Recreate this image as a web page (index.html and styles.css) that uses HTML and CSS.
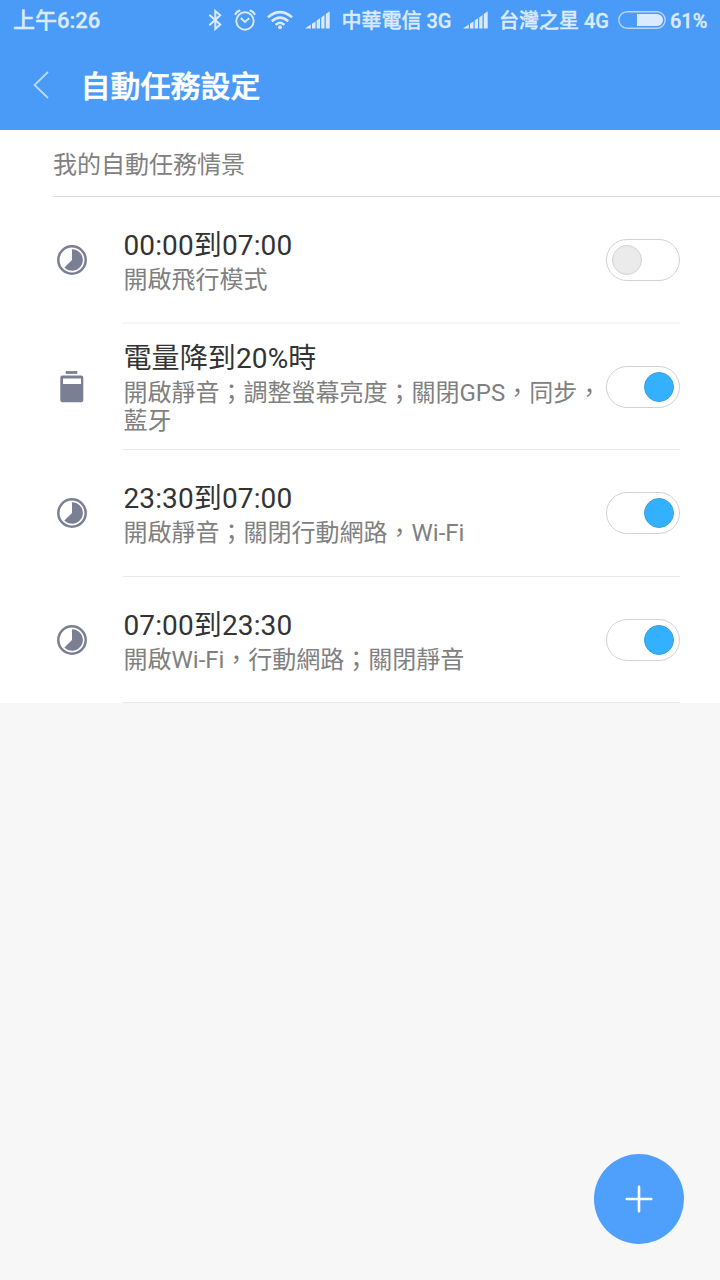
FILE: index.html
```html
<!DOCTYPE html>
<html lang="zh-Hant">
<head>
<meta charset="utf-8">
<title>自動任務設定</title>
<link rel="stylesheet" href="styles.css">
</head>
<body>
<svg class="defs" width="0" height="0">
  <symbol id="clock" viewBox="0 0 30 30">
    <circle cx="15" cy="15" r="13.7" fill="none" stroke="#7a7f94" stroke-width="2.5"/>
    <path d="M15 15V4.2A10.8 10.8 0 1 1 7.4 22.6Z" fill="#7a7f94"/>
  </symbol>
  <symbol id="signal" viewBox="0 0 26 18">
    <path d="M0 17.5 5.8 13.5V17.5ZM7 12.8 10.5 10.4V17.5H7ZM11.7 9.6 15 7.2V17.5H11.7ZM16.2 6.4 19.5 4V17.5H16.2ZM20.8 3 24.7.2V17.5H20.8Z" fill="currentColor"/>
  </symbol>
</svg>
<div class="screen">
  <header class="header">
    <div class="status">
      <span class="time">上午6:26</span>
      <svg class="bt" viewBox="0 0 14 22"><path d="M1.3 5.8 12.2 15.6 7.3 20V2L12.2 6.2 1.3 16.2" fill="none" stroke="currentColor" stroke-width="2"/></svg>
      <svg class="alarm" viewBox="0 0 22 22"><circle cx="11" cy="12" r="8.7" fill="none" stroke="currentColor" stroke-width="1.9"/><path d="M6.7 9 11 13 15.2 9.2" fill="none" stroke="currentColor" stroke-width="1.9"/><path d="M1 5.7Q2.6 2.4 6.3 1.3M15.7 1.3Q19.4 2.4 21 5.7" fill="none" stroke="currentColor" stroke-width="2"/></svg>
      <svg class="wifi" viewBox="0 0 26 20"><path d="M1 7.2Q13-3 25 7.2M4.8 11.2Q13 4 21.2 11.2M8.6 14.9Q13 10.7 17.4 14.9" fill="none" stroke="currentColor" stroke-width="2.5"/><circle cx="13" cy="17.2" r="2" fill="currentColor"/></svg>
      <svg class="signal"><use href="#signal"/></svg>
      <span class="carrier first">中華電信 3G</span>
      <svg class="signal second"><use href="#signal"/></svg>
      <span class="carrier">台灣之星 4G</span>
      <svg class="battery" viewBox="0 0 48 18"><rect x=".8" y=".8" width="46.4" height="16.4" rx="8.2" fill="none" stroke="currentColor" stroke-width="1.4" opacity=".75"/><path d="M19 3H39A6 6 0 0 1 39 15H19Z" fill="currentColor"/></svg>
      <span class="carrier percent">61%</span>
    </div>
    <div class="titlebar">
      <svg class="back" viewBox="0 0 16 28"><path d="M15 1 1.5 14 15 27" fill="none" stroke="#fff" stroke-width="1.8" opacity=".62"/></svg>
      <h1 class="title">自動任務設定</h1>
    </div>
  </header>
  <main class="list">
    <h2 class="section">我的自動任務情景</h2>
    <div class="row soft">
      <svg class="icon"><use href="#clock"/></svg>
      <div class="body"><div class="text"><div class="name">00:00到07:00</div><div class="desc">開啟飛行模式</div></div><span class="toggle"><i class="knob"></i></span></div>
    </div>
    <div class="row short">
      <svg class="icon" viewBox="0 0 30 30"><path d="M8.7-.9H20.3V1.9H8.7Z" fill="#7a7f94"/><path fill-rule="evenodd" d="M5.2 3.5H24.3Q26.3 3.5 26.3 5.5V28.3Q26.3 30.3 24.3 30.3H5.2Q3.3 30.3 3.3 28.3V5.5Q3.3 3.5 5.2 3.5ZM6 6.5V11.9H24V6.5Z" fill="#7a7f94"/></svg>
      <div class="body"><div class="text"><div class="name">電量降到20%時</div><div class="desc">開啟靜音；調整螢幕亮度；關閉GPS，同步，<br>藍牙</div></div><span class="toggle on"><i class="knob"></i></span></div>
    </div>
    <div class="row">
      <svg class="icon"><use href="#clock"/></svg>
      <div class="body"><div class="text"><div class="name">23:30到07:00</div><div class="desc">開啟靜音；關閉行動網路，Wi-Fi</div></div><span class="toggle on"><i class="knob"></i></span></div>
    </div>
    <div class="row short">
      <svg class="icon"><use href="#clock"/></svg>
      <div class="body"><div class="text"><div class="name">07:00到23:30</div><div class="desc">開啟Wi-Fi，行動網路；關閉靜音</div></div><span class="toggle on"><i class="knob"></i></span></div>
    </div>
  </main>
  <button class="add" aria-label="新增"><svg viewBox="0 0 28 28" width="28" height="28"><path d="M14 1.8V26.2M1.8 14H26.2" stroke="#fff" stroke-width="2.6" stroke-linecap="round"/></svg></button>
</div>
</body>
</html>
```

FILE: styles.css
```css
* { box-sizing: border-box; }
body {
  margin: 0;
  font-family: Roboto, "Noto Sans CJK TC", sans-serif;
}
.defs { position: absolute; }
.screen {
  display: flex;
  flex-direction: column;
  width: 720px;
  height: 1280px;
  overflow: hidden;
  background: #f7f7f7;
}
.header {
  height: 130px;
  background: #4a9af8;
  color: #fff;
}
.status {
  display: flex;
  align-items: center;
  height: 40px;
  padding-left: 13px;
  color: #dbeafe;
  white-space: nowrap;
}
.status svg { flex: none; }
.time,
.carrier {
  font-weight: 500;
  line-height: 40px;
  padding-top: 2px;
  -webkit-text-stroke: 0.35px currentColor;
}
.time { width: 195px; font-size: 22px; }
.bt { width: 14px; height: 22px; }
.alarm { width: 22px; height: 22px; margin-left: 12px; }
.wifi { width: 26px; height: 20px; margin-left: 11px; }
.signal { width: 26px; height: 18px; margin-left: 12px; }
.signal.second { margin-left: 0; }
.carrier { width: 120px; margin-left: 10.5px; font-size: 20px; }
.carrier.first { width: 121px; }
.battery { width: 48px; height: 18px; margin-left: -1px; }
.carrier.percent { width: auto; margin-left: 4px; }
.titlebar {
  display: flex;
  align-items: center;
  height: 90px;
  padding-left: 33px;
}
.back { width: 16px; height: 28px; }
.title {
  margin: 0 0 0 31.5px;
  padding-top: 3px;
  font-size: 30px;
  font-weight: 500;
  line-height: 87px;
  -webkit-text-stroke: 0.5px currentColor;
}
.list { background: #fff; }
.section {
  height: 67px;
  margin: 0 0 0 53px;
  padding-top: 2px;
  border-bottom: 1px solid #dfdfdf;
  color: #808080;
  font-size: 24px;
  font-weight: 400;
  line-height: 66px;
}
.row {
  display: flex;
  align-items: center;
  height: 127px;
  padding: 0 40px 0 57px;
}
.row.short { height: 126px; }
.icon {
  flex: none;
  width: 30px;
  height: 30px;
  margin-bottom: 1px;
  overflow: visible;
}
.body {
  display: flex;
  align-items: center;
  flex: 1;
  height: 100%;
  margin-left: 36px;
  border-bottom: 1px solid #e9e9e9;
}
.soft .body { border-bottom: 2px solid #f5f5f5; }
.text { flex: 1; padding-left: 0.5px; white-space: nowrap; }
.name {
  padding-top: 2px;
  color: #333;
  font-size: 28px;
  letter-spacing: 0.12px;
  line-height: 36px;
}
.desc { padding-top: 2px; color: #808080; font-size: 24px; line-height: 28px; }
.toggle {
  flex: none;
  width: 74px;
  height: 42px;
  margin-left: -74px;
  padding: 5px;
  border: 1px solid #d2d2d2;
  border-radius: 21px;
}
.knob {
  display: block;
  width: 30px;
  height: 30px;
  border: 1px solid #d2d2d2;
  border-radius: 50%;
  background: #ebebeb;
}
.on .knob {
  margin-left: 32px;
  border-color: #3a9fe0;
  background: #33b1ff;
}
.add {
  display: flex;
  align-items: center;
  justify-content: center;
  width: 90px;
  height: 90px;
  margin: auto 36px 36px auto;
  padding: 0;
  border: 0;
  border-radius: 50%;
  background: #4f9ffc;
}
```
